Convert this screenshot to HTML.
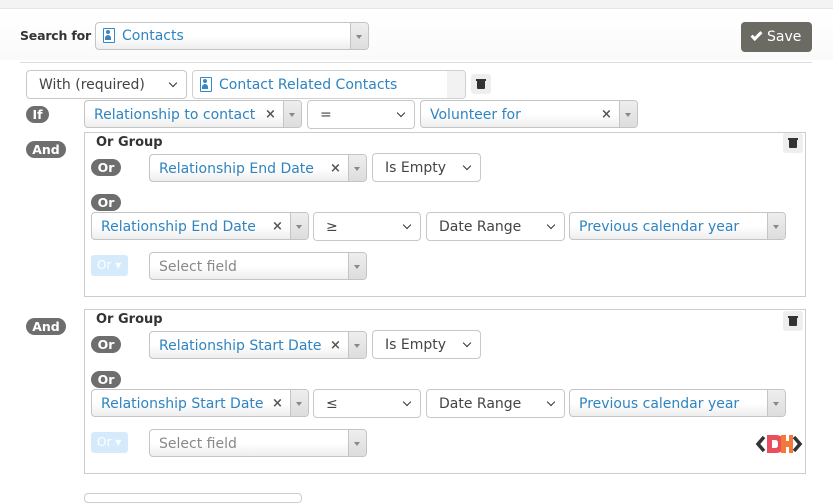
<!DOCTYPE html>
<html><head><meta charset="utf-8"><style>
*{box-sizing:border-box}
body{margin:0;width:833px;height:497px;overflow:hidden;background:#fff;font-family:"DejaVu Sans","Liberation Sans",sans-serif;font-size:14px;color:#333;position:relative}
.a{position:absolute}
.s2{position:absolute;border:1px solid #c4c4c4;border-radius:4px;background:linear-gradient(#fff 50%,#eee);color:#2f84c0;font-size:14px;line-height:28px;padding-left:9px;white-space:nowrap;overflow:hidden}
.s2 .ar{position:absolute;right:0;top:0;bottom:0;width:18px;border-left:1px solid #c4c4c4;background:linear-gradient(#eee,#ddd)}
.s2 .ar:after{content:"";position:absolute;left:5px;top:12px;border:3px solid transparent;border-top:4px solid #888}
.s2 .x{position:absolute;top:0;color:#555;font-size:13px;font-weight:bold}
.s2.ph{color:#888}
.ns{position:absolute;border:1px solid #c8c8c8;border-radius:4px;background:#fff;color:#444;font-size:14px;line-height:28px;padding-left:12px;white-space:nowrap}
.ns:after{content:"";position:absolute;right:10px;top:9px;width:5px;height:5px;border-right:1.5px solid #333;border-bottom:1.5px solid #333;transform:rotate(45deg)}
.bd{position:absolute;background:#6e6e6e;color:#fff;font-weight:bold;font-size:12.5px;border-radius:9px;text-align:center;line-height:17px;height:17px}
.box{position:absolute;border:1px solid #ccc;background:#fff}
.og{position:absolute;font-weight:bold;font-size:13px;color:#333}
.tr{position:absolute;width:20px;height:20px;background:#eee;border-radius:3px}
.tr:before{content:"";position:absolute;left:6px;top:7px;width:8px;height:8px;background:#333;border-radius:0 0 1px 1px}
.tr:after{content:"";position:absolute;left:5px;top:5px;width:10px;height:2px;background:#333}
.orl{position:absolute;background:#d5ebfb;color:#fff;font-size:12px;border-radius:3px;line-height:21px;padding-left:6px;width:37px;height:21px}
.ci{position:absolute;width:12px;height:15px;border:1.5px solid #3a86c4;border-radius:1px;background:#fff}
.ci:before{content:"";position:absolute;left:2px;top:1px;width:4px;height:4px;border-radius:50%;background:#3a86c4}
.ci:after{content:"";position:absolute;left:1px;top:6px;width:6px;height:5px;border-radius:3px 3px 0 0;background:#3a86c4}
</style></head><body>
<div class="a" style="left:0;top:0;width:833px;height:9px;background:#f3f3f3;border-bottom:1px solid #e6e6e6"></div>
<div class="a" style="left:0;top:10px;width:833px;height:50px;background:linear-gradient(#fff,#fafafa)"></div>
<div class="a" style="left:20px;top:28px;font-weight:bold;font-size:12.5px;letter-spacing:-0.2px;color:#333">Search for</div>
<div class="s2" style="left:95px;top:22px;width:274px;height:28px;line-height:27px;padding-left:26px">Contacts<span class="ar"></span></div>
<div class="ci" style="left:103px;top:28px"></div>
<div class="a" style="left:741px;top:22px;width:71px;height:30px;background:#6b6b64;border-radius:4px;color:#fff;font-size:14px;line-height:30px;padding-left:26px">Save</div>
<div class="a" style="left:751px;top:32px;width:11px;height:6px;border-left:3px solid #fff;border-bottom:3px solid #fff;transform:rotate(-45deg)"></div>
<div class="a" style="left:20px;top:62px;width:792px;height:1px;background:#ddd"></div>

<div class="ns" style="left:26px;top:70px;width:161px;height:29px;padding-left:12px">With (required)</div>
<div class="s2" style="left:192px;top:70px;width:274px;height:29px;line-height:28px;padding-left:26px;border-color:#d0d0d0;background:#fff">Contact Related Contacts<span style="position:absolute;right:0;top:0;bottom:0;width:18px;background:#f2f2f2"></span></div>
<div class="ci" style="left:200px;top:77px"></div>
<div class="tr" style="left:471px;top:74px"></div>

<div class="bd" style="left:26px;top:106px;width:23px">If</div>
<div class="s2" style="left:84px;top:100px;width:218px;height:28px">Relationship to contact<span class="x" style="left:180px">×</span><span class="ar"></span></div>
<div class="ns" style="left:307px;top:100px;width:108px;height:29px">=</div>
<div class="s2" style="left:420px;top:100px;width:218px;height:28px">Volunteer for<span class="x" style="left:180px">×</span><span class="ar"></span></div>

<div class="bd" style="left:26px;top:141px;width:40px">And</div>
<div class="box" style="left:84px;top:132px;width:722px;height:165px"></div>
<div class="og" style="left:96px;top:135px">Or Group</div>
<div class="tr" style="left:783px;top:133px"></div>
<div class="bd" style="left:91px;top:159px;width:30px">Or</div>
<div class="s2" style="left:149px;top:154px;width:218px;height:28px">Relationship End Date<span class="x" style="left:180px">×</span><span class="ar"></span></div>
<div class="ns" style="left:372px;top:153px;width:109px;height:29px">Is Empty</div>
<div class="bd" style="left:91px;top:194px;width:30px">Or</div>
<div class="s2" style="left:91px;top:212px;width:218px;height:28px">Relationship End Date<span class="x" style="left:180px">×</span><span class="ar"></span></div>
<div class="ns" style="left:313px;top:212px;width:108px;height:29px">≥</div>
<div class="ns" style="left:426px;top:212px;width:139px;height:29px">Date Range</div>
<div class="s2" style="left:569px;top:212px;width:217px;height:28px">Previous calendar year<span class="ar"></span></div>
<div class="orl" style="left:91px;top:255px">Or ▾</div>
<div class="s2 ph" style="left:149px;top:252px;width:218px;height:28px">Select field<span class="ar"></span></div>

<div class="bd" style="left:26px;top:318px;width:40px">And</div>
<div class="box" style="left:84px;top:309px;width:722px;height:165px"></div>
<div class="og" style="left:96px;top:312px">Or Group</div>
<div class="tr" style="left:783px;top:311px"></div>
<div class="bd" style="left:91px;top:336px;width:30px">Or</div>
<div class="s2" style="left:149px;top:331px;width:218px;height:28px">Relationship Start Date<span class="x" style="left:180px">×</span><span class="ar"></span></div>
<div class="ns" style="left:372px;top:330px;width:109px;height:29px">Is Empty</div>
<div class="bd" style="left:91px;top:371px;width:30px">Or</div>
<div class="s2" style="left:91px;top:389px;width:218px;height:28px">Relationship Start Date<span class="x" style="left:180px">×</span><span class="ar"></span></div>
<div class="ns" style="left:313px;top:389px;width:108px;height:29px">≤</div>
<div class="ns" style="left:426px;top:389px;width:139px;height:29px">Date Range</div>
<div class="s2" style="left:569px;top:389px;width:217px;height:28px">Previous calendar year<span class="ar"></span></div>
<div class="orl" style="left:91px;top:432px">Or ▾</div>
<div class="s2 ph" style="left:149px;top:429px;width:218px;height:28px">Select field<span class="ar"></span></div>

<svg class="a" style="left:754px;top:432px" width="50" height="24" viewBox="0 0 50 24">
<path d="M10 5 L4 12 L10 19" fill="none" stroke="#333" stroke-width="3.5"/>
<path d="M40 5 L46 12 L40 19" fill="none" stroke="#333" stroke-width="3.5"/>
<path d="M13 3 H22 Q29 3 29 10 V14 Q29 21 22 21 H13 Z M18 8 V16 H21 Q24 16 24 13 V11 Q24 8 21 8 Z" fill="#e84e5e" fill-rule="evenodd"/>
<path d="M27 3 H32 V9 H35 V3 H39 V21 H35 V15 H32 V21 H27 Z" fill="#f2793a"/>
</svg>

<div class="a" style="left:84px;top:493px;width:218px;height:10px;border:1px solid #ccc;border-radius:4px"></div>
</body></html>
